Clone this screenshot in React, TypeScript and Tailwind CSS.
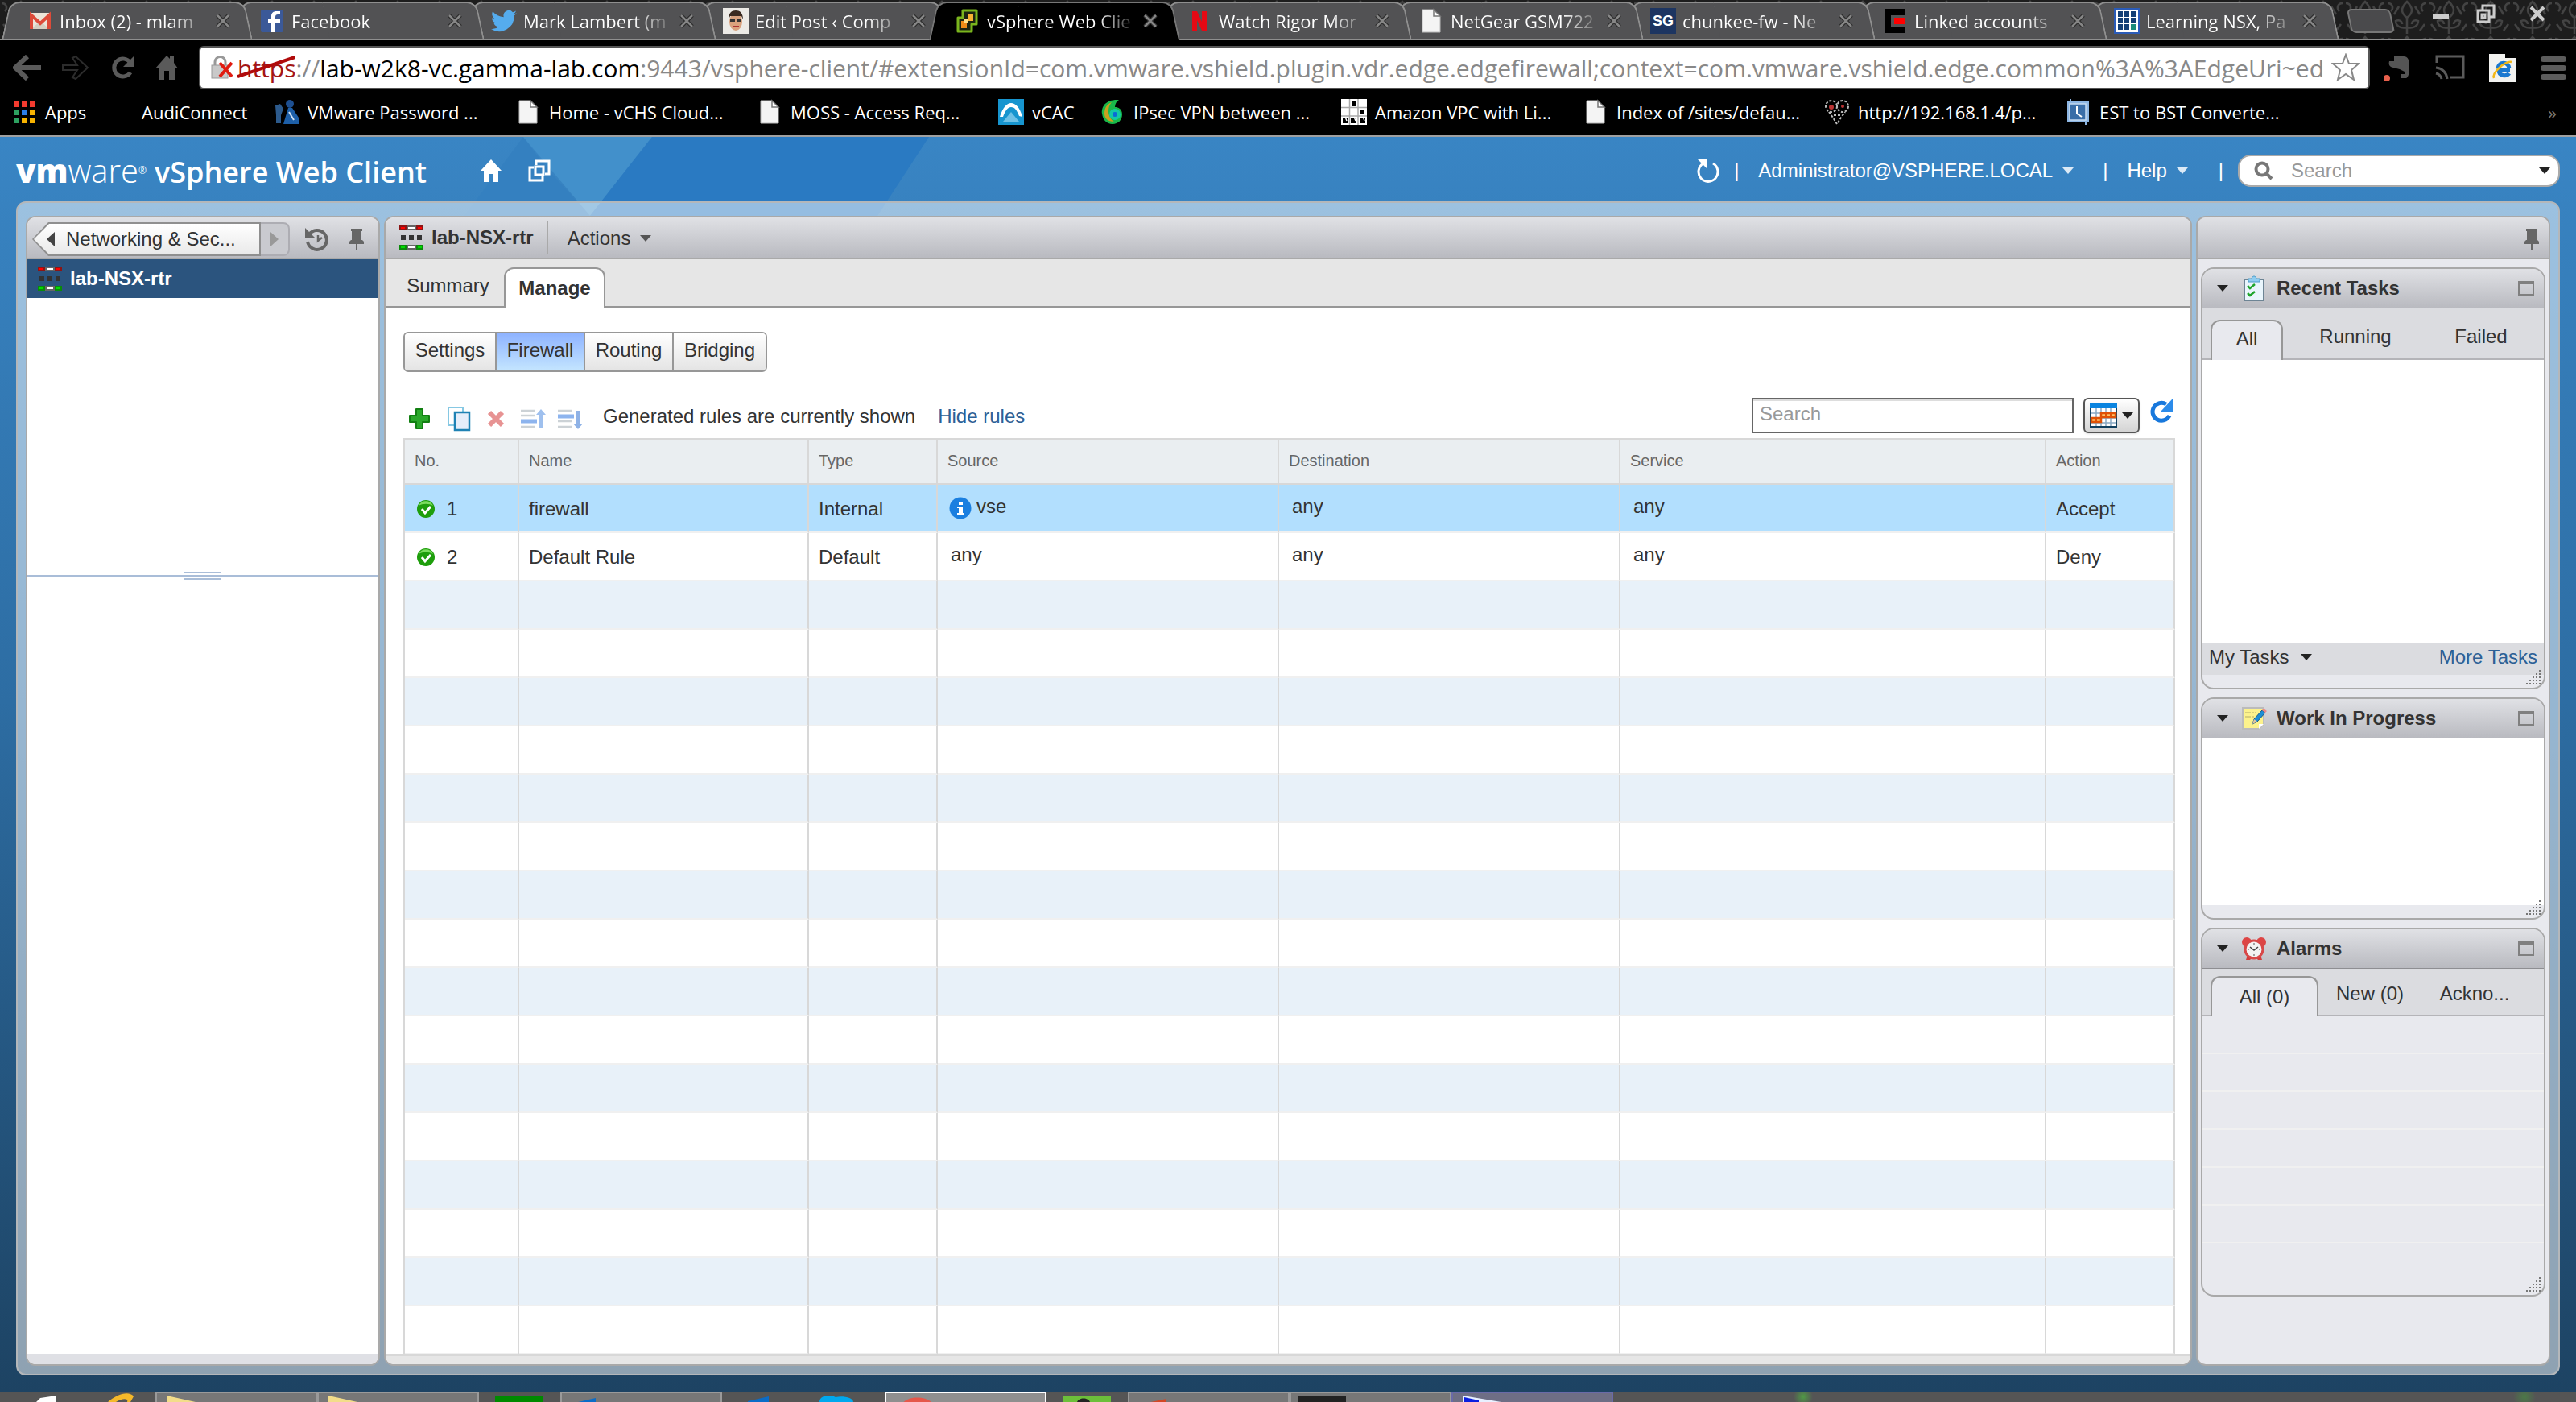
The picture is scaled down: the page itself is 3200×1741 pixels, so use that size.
import React from 'react';

interface BrowserTab {
  title: string;
  icon: React.ReactNode;
  active?: boolean;
}

interface Bookmark {
  label: string;
  icon: React.ReactNode;
  width: string;
}

interface Rule {
  no: number;
  name: string;
  type: string;
  source: string;
  info?: boolean;
  destination: string;
  service: string;
  action: string;
}

/* ---------- ICONS ---------- */

const DocIcon = () => (
  <svg viewBox="0 0 32 32" className="size-8">
    <path d="M5 2h14l8 8v20H5z" fill="#f4f4f4" stroke="#bbb" strokeWidth="1" />
    <path d="M19 2v8h8z" fill="#fff" stroke="#777" strokeWidth="1.5" />
  </svg>
);

const GmailIcon = () => (
  <svg viewBox="0 0 32 32" className="size-8">
    <rect x="3" y="6" width="26" height="20" fill="#ece5d8" />
    <path d="M5 26L16 16l11 10z" fill="#d6cfc0" />
    <path d="M5 26V9l11 10L27 9v17" fill="none" stroke="#dd4b39" strokeWidth="4" />
  </svg>
);

const FacebookIcon = () => (
  <svg viewBox="0 0 32 32" className="size-8">
    <rect x="2" y="2" width="28" height="28" rx="2" fill="#3b5998" />
    <path d="M26 8h-3c-2 0-3 1-3 3v3h6v4h-6v12h-5V18h-4v-4h4v-4c0-4 3-6 6-6h5z" fill="#fff" />
  </svg>
);

const TwitterIcon = () => (
  <svg viewBox="0 0 24 24" className="size-8">
    <path
      fill="#55acee"
      d="M23.9 4.6a10 10 0 0 1-2.8.8 5 5 0 0 0 2.2-2.7c-1 .6-2 1-3.1 1.2a4.9 4.9 0 0 0-8.4 4.5A14 14 0 0 1 1.6 3.2a4.9 4.9 0 0 0 1.5 6.5 5 5 0 0 1-2.2-.6 4.9 4.9 0 0 0 4 4.9 5 5 0 0 1-2.3.1 4.9 4.9 0 0 0 4.6 3.4A10 10 0 0 1 0 19.5a14 14 0 0 0 21.5-12.4 10 10 0 0 0 2.4-2.5z"
    />
  </svg>
);

const FaceIcon = () => (
  <svg viewBox="0 0 32 32" className="size-8">
    <rect width="32" height="32" fill="#eceae6" />
    <ellipse cx="16" cy="17" rx="8" ry="11" fill="#d9a27e" />
    <path d="M7 14c0-8 4-11 9-11s9 3 9 11l-2-4H9z" fill="#3a2a20" />
    <path d="M9 14h6v3H9zM17 14h6v3h-6z" fill="#333" />
    <path d="M12 23h8" stroke="#a33" strokeWidth="2" />
  </svg>
);

const VsphereIcon = () => (
  <svg viewBox="0 0 32 32" className="size-8">
    <path d="M13 3h14v17h-6v9H4V12h6V3z" fill="#1c2412" stroke="#7ab51d" strokeWidth="3" strokeLinejoin="round" />
    <rect x="16" y="7" width="7" height="9" fill="#f9b233" />
    <rect x="8" y="16" width="7" height="9" fill="#ef8a17" />
    <path d="M12 13h5v6h-5z" fill="#ffe08a" />
  </svg>
);

const NetflixIcon = () => (
  <svg viewBox="0 0 32 32" className="size-8">
    <path d="M7 4h6l6 13V4h6v24h-6l-6-13v13H7z" fill="#e50914" />
  </svg>
);

const SgIcon = () => (
  <span className="flex size-8 items-center justify-center bg-[#1d3561] font-['Liberation_Sans'] text-lg font-bold text-white">SG</span>
);

const EIcon = () => (
  <svg viewBox="0 0 32 32" className="size-8">
    <path d="M3 1h26v8H11v14h18v8H3z" fill="#000" />
    <rect x="15" y="12" width="13" height="8" fill="#f00" />
  </svg>
);

const GridIcon = () => (
  <svg viewBox="0 0 32 32" className="size-8">
    <rect x="1" y="1" width="30" height="30" fill="#fff" stroke="#2a5bb8" strokeWidth="2" />
    {[4, 12, 20].map(y => [5, 13, 21].map(x => (
      <rect key={`${x}-${y}`} x={x} y={y} width="6" height="7" fill={x === 21 && y === 20 ? '#1a8c7a' : '#123e75'} />
    )))}
  </svg>
);

const AppsIcon = () => (
  <svg viewBox="0 0 32 32" className="size-8">
    {['#f33b2f', '#f33b2f', '#f33b2f', '#2da160', '#2b7de9', '#f7b200', '#2da160', '#f7b200', '#f7b200'].map((c, i) => (
      <rect key={i} x={3 + (i % 3) * 10} y={3 + Math.floor(i / 3) * 10} width="7" height="7" fill={c} />
    ))}
  </svg>
);

const VmPasswordIcon = () => (
  <svg viewBox="0 0 32 32" className="size-8">
    <circle cx="20" cy="6" r="5" fill="#1d4f91" />
    <path d="M12 31l6-20h5l8 12v8z" fill="#1d5fa8" />
    <path d="M2 8l6-2 4 6-3 8v10H3V20z" fill="#2c5a8c" />
    <path d="M19 16l6 10" stroke="#cfe0f2" strokeWidth="2" />
  </svg>
);

const VcacIcon = () => (
  <svg viewBox="0 0 32 32" className="size-8">
    <rect width="32" height="32" fill="#1795cf" />
    <path d="M2 22C6 10 11 5 16 5s11 5 14 17l-4-1c-3-8-6-11-10-11S9 14 6 22z" fill="#fff" />
    <path d="M6 28l10-12 10 12z" fill="#6fc1e6" />
  </svg>
);

const IpsecIcon = () => (
  <svg viewBox="0 0 32 32" className="size-8">
    <path d="M24 1C8 0 2 9 3 18c1 8 6 13 13 13s12-5 12-12-5-9-9-9c0-4 2-7 5-9z" fill="#19b84a" />
    <path d="M6 18c0-8 4-12 9-14-7 8-4 20 3 24-8 0-12-4-12-10z" fill="#c9a01f" />
    <circle cx="19" cy="19" r="7" fill="#12c9a6" />
    <circle cx="19" cy="19" r="3" fill="#0b6bd6" />
  </svg>
);

const AmazonIcon = () => (
  <svg viewBox="0 0 32 32" className="size-8">
    <rect width="32" height="32" fill="#fff" />
    <path d="M0 10.5h32M0 21h32M10.5 0v32M21 0v32" stroke="#aaa" strokeWidth="1.5" />
    <rect x="13" y="2" width="6" height="7" fill="#000" />
    <rect x="23" y="13" width="6" height="6" fill="#000" />
    <path d="M2 24h7v6H2zM12 24h7v6h-7zM23 24h7v6h-7z" fill="#000" />
    <path d="M5 22l2 5M16 22l2 5M27 22l2 5" stroke="#fff" strokeWidth="1.5" />
  </svg>
);

const BugIcon = () => (
  <svg viewBox="0 0 32 32" className="size-8">
    <g fill="none" stroke="#bbb" strokeWidth="2" strokeDasharray="3 2">
      <circle cx="9" cy="9" r="7" />
      <circle cx="23" cy="9" r="7" />
      <path d="M6 16l5 7 5 8 5-8 5-7M12 20h8" />
    </g>
    <circle cx="9" cy="10" r="3" fill="#b33" />
    <circle cx="23" cy="9" r="2" fill="#b33" />
  </svg>
);

const ClockIcon = () => (
  <svg viewBox="0 0 32 32" className="size-8">
    <path d="M2 3h3V0h2v3h22v26h-2v3h-3v-3H2z" fill="#8db6e3" />
    <rect x="5" y="6" width="20" height="20" fill="#3a6ea8" stroke="#c5daf0" strokeWidth="1.5" />
    <path d="M14 9v9l6 4" fill="none" stroke="#fff" strokeWidth="2" />
  </svg>
);

const RouterIcon = () => (
  <svg viewBox="0 0 30 30" className="size-[30px] shrink-0">
    <rect width="30" height="6" fill="#8c1515" />
    <path d="M2 2h5v2H2zM23 2h5v2h-5z" fill="#f00" />
    <rect x="9" width="12" height="6" fill="#666" />
    <rect x="11" y="2" width="8" height="2" fill="#fff" />
    <path d="M2 12h6v6H2zM12 12h6v6h-6zM22 12h6v6h-6z" fill="#333" />
    <rect y="24" width="30" height="6" fill="#0a8a0a" />
    <path d="M2 26h5v2H2zM23 26h5v2h-5z" fill="#0d0" />
    <rect x="9" y="24" width="12" height="6" fill="#666" />
    <rect x="11" y="26" width="8" height="2" fill="#fff" />
  </svg>
);

const PinIcon = () => (
  <svg viewBox="0 0 18 26" className="h-[26px] w-[18px]">
    <path d="M2 0h14v3h-1v11h1l2 2v3h-8v7H8v-7H0v-3l2-2h1V3H2z" fill="#666" />
  </svg>
);

const HistoryIcon = () => (
  <svg viewBox="0 0 32 32" className="size-8">
    <path d="M6 10a12 12 0 1 1-2 9" fill="none" stroke="#666" strokeWidth="4" />
    <path d="M1 2v12h12z" fill="#666" />
    <path d="M17 11v7l5-4" fill="none" stroke="#666" strokeWidth="2.5" />
  </svg>
);

const Caret = ({ className }: { className: string }) => (
  <svg viewBox="0 0 14 8" className={`h-2 w-3.5 shrink-0 ${className}`}>
    <path d="M0 0h14L7 8z" fill="currentColor" />
  </svg>
);

const CheckIcon = () => (
  <svg viewBox="0 0 24 24" className="size-6 shrink-0">
    <circle cx="12" cy="12" r="11" fill="#1e9e0c" />
    <path d="M3 8a10 10 0 0 1 18 0c-5-3-13-3-18 0z" fill="#7bdc5f" />
    <path d="M7 12l4 5 7-8" fill="none" stroke="#fff" strokeWidth="3" />
  </svg>
);

const InfoIcon = () => (
  <svg viewBox="0 0 28 28" className="size-7 shrink-0">
    <circle cx="14" cy="14" r="13.5" fill="#1a7fe0" />
    <path d="M12 6h5v4h-5zM10 12h7v8h2v2h-9v-2h2v-6h-2z" fill="#fff" />
  </svg>
);

const TasksIcon = () => (
  <svg viewBox="0 0 28 32" className="h-8 w-7">
    <rect x="2" y="5" width="24" height="26" fill="#e9f5fc" stroke="#6d8494" strokeWidth="2" />
    <path d="M7 8V4h4c1-4 5-4 6 0h4v4z" fill="#8fcdf0" stroke="#4a9cc9" strokeWidth="1" />
    <path d="M6 13l3 3 6-5M6 22l3 3 6-5" fill="none" stroke="#1fa52c" strokeWidth="2.5" />
  </svg>
);

const NoteIcon = () => (
  <svg viewBox="0 0 32 28" className="h-7 w-8">
    <path d="M2 1h26v20l-6 6H2z" fill="#fcf28c" stroke="#bbb" strokeWidth="2" />
    <path d="M22 27v-6h6z" fill="#fff" />
    <path d="M5 7h14M5 12h12" stroke="#d8cf7a" strokeWidth="2" strokeDasharray="3 1" />
    <path d="M14 21l2-6L26 4l4 3-10 11z" fill="#1c8ed6" stroke="#125a8a" />
    <path d="M26 4l2-2 4 3-2 2z" fill="#e88" />
    <path d="M14 21l2-6 4 3z" fill="#e7c79c" />
  </svg>
);

const AlarmIcon = () => (
  <svg viewBox="0 0 32 30" className="h-[30px] w-8">
    <circle cx="7" cy="7" r="6" fill="#dd4545" />
    <circle cx="25" cy="7" r="6" fill="#dd4545" />
    <path d="M6 29l2-6h16l2 6h-5l-2-2h-6l-2 2z" fill="#d33c3c" />
    <circle cx="16" cy="16" r="11" fill="#f3f3f3" stroke="#d84848" strokeWidth="3" />
    <path d="M11 13l5 4 5-4" fill="none" stroke="#444" strokeWidth="1.5" />
    <path d="M16 8v2M16 22v2M8 16h2M22 16h2" stroke="#888" strokeWidth="1.5" />
  </svg>
);

const ResizeGrip = () => (
  <svg viewBox="0 0 20 20" className="absolute right-0.5 bottom-0.5 size-5">
    {[0, 1, 2, 3, 4].map(r => [0, 1, 2, 3, 4].filter(c => c + r >= 4).map(c => (
      <rect key={`${r}-${c}`} x={c * 4} y={r * 4} width="2" height="2" fill="#777" />
    )))}
  </svg>
);

/* ---------- DATA ---------- */

const browserTabs: BrowserTab[] = [
  { title: 'Inbox (2) - mlam', icon: <GmailIcon /> },
  { title: 'Facebook', icon: <FacebookIcon /> },
  { title: 'Mark Lambert (m', icon: <TwitterIcon /> },
  { title: 'Edit Post ‹ Comp', icon: <FaceIcon /> },
  { title: 'vSphere Web Clie', icon: <VsphereIcon />, active: true },
  { title: 'Watch Rigor Mor', icon: <NetflixIcon /> },
  { title: 'NetGear GSM722', icon: <DocIcon /> },
  { title: 'chunkee-fw - Ne', icon: <SgIcon /> },
  { title: 'Linked accounts', icon: <EIcon /> },
  { title: 'Learning NSX, Pa', icon: <GridIcon /> },
];

const bookmarks: Bookmark[] = [
  { label: 'Apps', icon: <AppsIcon />, width: 'w-[120px]' },
  { label: 'AudiConnect', icon: null, width: 'w-[206px]' },
  { label: 'VMware Password ...', icon: <VmPasswordIcon />, width: 'w-[300px]' },
  { label: 'Home - vCHS Cloud...', icon: <DocIcon />, width: 'w-[300px]' },
  { label: 'MOSS - Access Req...', icon: <DocIcon />, width: 'w-[300px]' },
  { label: 'vCAC', icon: <VcacIcon />, width: 'w-[126px]' },
  { label: 'IPsec VPN between ...', icon: <IpsecIcon />, width: 'w-[300px]' },
  { label: 'Amazon VPC with Li...', icon: <AmazonIcon />, width: 'w-[300px]' },
  { label: 'Index of /sites/defau...', icon: <DocIcon />, width: 'w-[300px]' },
  { label: 'http://192.168.1.4/p...', icon: <BugIcon />, width: 'w-[300px]' },
  { label: 'EST to BST Converte...', icon: <ClockIcon />, width: 'w-[300px]' },
];

const rules: Rule[] = [
  { no: 1, name: 'firewall', type: 'Internal', source: 'vse', info: true, destination: 'any', service: 'any', action: 'Accept' },
  { no: 2, name: 'Default Rule', type: 'Default', source: 'any', destination: 'any', service: 'any', action: 'Deny' },
];

const EMPTY_ROWS = 16;

/* ---------- BROWSER ---------- */

const TabStrip = () => (
  <div className="relative flex h-[50px] overflow-hidden bg-[#1d1d1d] pl-2.5">
    <svg className="absolute inset-0 size-full">
      <defs>
        <pattern id="damask" width="52" height="44" patternUnits="userSpaceOnUse">
          <g fill="none" stroke="#434343" strokeWidth="2.5">
            <path d="M26 2c-8 8-8 14 0 20 8-6 8-12 0-20zM26 22v20M26 34c-8 2-14-2-14-8 4-2 8 0 8 4M26 34c8 2 14-2 14-8-4-2-8 0-8 4" />
            <path d="M2 4c6 0 8 6 4 10M50 4c-6 0-8 6-4 10M4 30l6 8M48 30l-6 8M16 8l-6 10M36 8l6 10" />
          </g>
        </pattern>
      </defs>
      <rect width="100%" height="100%" fill="url(#damask)" />
    </svg>
    <div className="absolute inset-x-0 bottom-0 h-0.5 bg-[#8f8f8f]" />
    {browserTabs.map((tab, i) => {
      const skin = tab.active ? 'bg-black border-[#777]' : 'bg-[#525254] border-[#8f8f8f]';
      return (
        <div key={tab.title} className="relative w-72" style={{ zIndex: tab.active ? 30 : 20 - i }}>
          <span className={`absolute top-0.5 bottom-0 -left-2 w-1/2 origin-bottom-left -skew-x-12 rounded-tl-xl border-t-2 border-l-2 ${skin}`} />
          <span className={`absolute top-0.5 -right-4 bottom-0 w-2/3 origin-bottom-right skew-x-12 rounded-tr-xl border-t-2 border-r-2 ${skin}`} />
          {!tab.active && <span className="absolute -right-4 bottom-0 -left-2 h-0.5 bg-[#8f8f8f]" />}
          <div className="relative flex h-full items-center pt-0.5 pl-6">
            {tab.icon}
            <span
              className={`ml-2 w-[184px] bg-clip-text text-[22px] whitespace-nowrap text-transparent ${
                tab.active ? 'bg-linear-to-r from-white from-75% to-[#222]' : 'bg-linear-to-r from-white from-75% to-[#666]'
              }`}
            >
              {tab.title}
            </span>
            <button aria-label={`Close ${tab.title}`} className="ml-2.5">
              <svg viewBox="0 0 18 18" className="size-[18px]">
                <path d="M2 2l14 14M16 2L2 16" stroke="#2c2c2c" strokeWidth="5" />
                <path d="M2 2l14 14M16 2L2 16" stroke="#868686" strokeWidth="2.5" />
              </svg>
            </button>
          </div>
        </div>
      );
    })}
    <button aria-label="New tab" className="relative mt-[11px] ml-7 h-[30px] w-[54px] skew-x-12 rounded-md border-2 border-[#777] bg-[#4a4a4c]" />
    <div className="relative mr-8 ml-auto flex items-center gap-7 pb-4 text-[#ccc]">
      <button aria-label="Minimize" className="flex w-8 justify-center pt-2"><span className="h-1.5 w-5 bg-[#ccc]" /></button>
      <button aria-label="Restore" className="w-8">
        <svg viewBox="0 0 24 24" className="size-6" fill="none" stroke="currentColor" strokeWidth="3">
          <path d="M8 7V2h14v14h-5M2 8h14v14H2zM7 13h4v4H7z" />
        </svg>
      </button>
      <button aria-label="Close" className="flex w-8 justify-center">
        <svg viewBox="0 0 20 20" className="size-5"><path d="M2 2l16 16M18 2L2 18" stroke="currentColor" strokeWidth="4" /></svg>
      </button>
    </div>
  </div>
);

const AddressBar = () => (
  <div className="flex h-16 items-center bg-black pt-1 pr-3 pl-4">
    <div className="flex w-[231px] items-center gap-6 text-[#5a5a5a]">
      <button aria-label="Back">
        <svg viewBox="0 0 36 32" className="h-8 w-9"><path d="M18 2L3 16l15 14M5 16h30" fill="none" stroke="currentColor" strokeWidth="6" /></svg>
      </button>
      <button aria-label="Forward">
        <svg viewBox="0 0 36 32" className="h-8 w-9"><path d="M2 13h18L14 4l4-2 15 14-15 14-4-2 6-9H2z" fill="none" stroke="#2c2c2c" strokeWidth="2" /></svg>
      </button>
      <button aria-label="Reload">
        <svg viewBox="0 0 32 32" className="size-8"><path d="M26 22a11 11 0 1 1 0-12" fill="none" stroke="currentColor" strokeWidth="5" /><path d="M30 2v13H17z" fill="currentColor" /></svg>
      </button>
      <button aria-label="Home">
        <svg viewBox="0 0 30 32" className="h-8 w-[30px]"><path d="M15 1l4 4V2h5v8l5 7h-4v14h-7V20h-6v11H5V17H1z" fill="currentColor" /></svg>
      </button>
    </div>
    <div className="flex h-[54px] min-w-0 flex-1 items-center rounded-md border-2 border-[#555] bg-white pr-1.5 pl-3 text-[30px]">
      <svg viewBox="0 0 30 32" className="h-8 w-[30px] shrink-0">
        <path d="M6 14V9a6 6 0 0 1 13 0v5" fill="none" stroke="#999" strokeWidth="3" />
        <rect x="2" y="13" width="20" height="16" fill="#c9c9c9" stroke="#999" />
        <path d="M12 10l15 17M27 10L12 27" stroke="#e01b10" strokeWidth="4" />
      </svg>
      <span className="relative ml-1 text-[#a31515]">
        https
        <svg viewBox="0 0 70 30" className="absolute top-1.5 left-0 h-[30px] w-full" preserveAspectRatio="none">
          <path d="M0 27L69 3" stroke="#b00b0b" strokeWidth="4" />
        </svg>
      </span>
      <span className="text-[#888]">://</span>
      <span className="text-black">lab-w2k8-vc.gamma-lab.com</span>
      <input
        aria-label="Address"
        className="min-w-0 flex-1 bg-transparent text-[#888] outline-none"
        defaultValue=":9443/vsphere-client/#extensionId=com.vmware.vshield.plugin.vdr.edge.edgefirewall;context=com.vmware.vshield.edge.common%3A%3AEdgeUri~ed"
      />
      <button aria-label="Bookmark this page" className="mr-1">
        <svg viewBox="0 0 36 36" className="size-9">
          <path d="M18 2l4 11h12l-9 8 3 12-10-7-10 7 3-12-9-8h12z" fill="#fff" stroke="#888" strokeWidth="2" />
        </svg>
      </button>
    </div>
    <div className="ml-4 flex items-center gap-7">
      <button aria-label="Clipper">
        <svg viewBox="0 0 36 36" className="size-9">
          <path d="M14 4h12c5 0 7 4 7 12s-1 14-4 15h-6v-5h4v-3l-6-3-8-2c-5-1-6-4-5-8h6z" fill="#555" />
          <circle cx="5" cy="31" r="4" fill="#e8604c" />
        </svg>
      </button>
      <button aria-label="Cast">
        <svg viewBox="0 0 38 32" className="h-8 w-[38px]" fill="none" stroke="#5a5a5a" strokeWidth="3">
          <path d="M3 10V2h33v26H20M2 16c8 1 13 6 14 14M2 23c4 1 6 3 7 7" />
        </svg>
      </button>
      <button aria-label="IE Tab">
        <svg viewBox="0 0 38 38" className="size-[38px]">
          <path d="M2 2h20v5h14v30H2z" fill="#f2f2f0" />
          <path d="M28 22H14c0 8 10 8 13 4M13 20c1-9 13-9 14 0" fill="none" stroke="#1b78d0" strokeWidth="5" />
          <path d="M8 32c-3-6 14-22 22-20" fill="none" stroke="#f2b81a" strokeWidth="2.5" />
        </svg>
      </button>
      <button aria-label="Menu" className="flex flex-col gap-1">
        <span className="h-[7px] w-8 rounded-sm bg-[#5c5c5c]" />
        <span className="h-[7px] w-8 rounded-sm bg-[#5c5c5c]" />
        <span className="h-[7px] w-8 rounded-sm bg-[#5c5c5c]" />
      </button>
    </div>
  </div>
);

const BookmarkBar = () => (
  <nav className="flex h-14 items-center border-b-2 border-[#a0a0a0] bg-black pr-6 pb-1 pl-3.5 text-[22px] text-white">
    {bookmarks.map(b => (
      <a key={b.label} href="#" className={`flex items-center gap-2.5 whitespace-nowrap ${b.width}`}>
        <span className="size-8 shrink-0">{b.icon}</span>
        {b.label}
      </a>
    ))}
    <button aria-label="More bookmarks" className="ml-auto text-[#777]">»</button>
  </nav>
);

/* ---------- VSPHERE ---------- */

const AppHeader = () => (
  <header className="flex h-20 items-center pt-1 pr-5 pl-5 text-2xl text-white">
    <div className="flex items-baseline font-['Open_Sans']">
      <span className="text-[40px] font-extrabold">vm</span>
      <span className="text-[40px] font-light">ware</span>
      <span className="self-center text-xs">®</span>
      <span className="ml-2.5 text-[36px] font-semibold">vSphere Web Client</span>
    </div>
    <button aria-label="Home" className="ml-[66px]">
      <svg viewBox="0 0 28 28" className="size-7"><path d="M14 0l13 14h-4v14h-6V18h-6v10H5V14H1z" fill="#fff" /></svg>
    </button>
    <button aria-label="New window" className="ml-8">
      <svg viewBox="0 0 28 28" className="size-7" fill="none" stroke="#fff" strokeWidth="3">
        <path d="M10 7V2h16v16h-5M7 10H2v16h16v-5M9 9h10v10H9z" />
      </svg>
    </button>
    <button aria-label="Refresh" className="ml-auto">
      <svg viewBox="0 0 28 30" className="h-[30px] w-7">
        <path d="M20 6a12 12 0 1 1-12 0" fill="none" stroke="#fff" strokeWidth="3" />
        <path d="M1 1h11v11z" fill="#fff" />
      </svg>
    </button>
    <span className="ml-[18px]">|</span>
    <button className="ml-6 flex items-center gap-3">Administrator@VSPHERE.LOCAL <Caret className="text-[#dceaf6]" /></button>
    <span className="ml-9">|</span>
    <button className="ml-6 flex items-center gap-3">Help <Caret className="text-[#dceaf6]" /></button>
    <span className="ml-[38px]">|</span>
    <div className="ml-[18px] flex h-10 w-[400px] items-center rounded-2xl border-2 border-[#aaa] bg-white pr-2.5 pl-[18px]">
      <svg viewBox="0 0 24 24" className="size-6 shrink-0">
        <circle cx="10" cy="10" r="7.5" fill="none" stroke="#777" strokeWidth="4" />
        <path d="M15 15l7 7" stroke="#777" strokeWidth="4" />
      </svg>
      <input aria-label="Search inventory" placeholder="Search" className="ml-[22px] min-w-0 flex-1 text-2xl outline-none placeholder:text-[#999]" />
      <Caret className="text-[#222]" />
    </div>
  </header>
);

const Navigator = () => (
  <aside className="flex w-[440px] shrink-0 flex-col overflow-hidden rounded-xl border-2 border-[#a9a9a9] bg-white">
    <div className="flex h-[52px] shrink-0 items-center border-b-2 border-[#a9a9a9] bg-linear-to-b from-[#e0e1e5] to-[#b9bac0] pt-1 pl-1.5">
      <button className="h-[42px] w-[284px] bg-[#8f8f8f] p-0.5 [clip-path:polygon(20px_0,100%_0,100%_100%,20px_100%,0_50%)]">
        <span className="flex h-full items-center bg-linear-to-b from-white to-[#e9e9e9] pl-4 [clip-path:polygon(19px_0,100%_0,100%_100%,19px_100%,0_50%)]">
          <svg viewBox="0 0 10 18" className="h-[18px] w-2.5"><path d="M10 0v18L0 9z" fill="#444" /></svg>
          <span className="ml-3.5">Networking &amp; Sec...</span>
        </span>
      </button>
      <button aria-label="Forward" className="flex h-[42px] w-9 items-center justify-center rounded-r-lg border-2 border-l-0 border-[#adadb3] bg-[#c9cacf]">
        <svg viewBox="0 0 10 18" className="h-[18px] w-2.5"><path d="M0 0v18l10-9z" fill="#999" /></svg>
      </button>
      <button aria-label="History" className="ml-[18px]"><HistoryIcon /></button>
      <button aria-label="Pin" className="ml-6"><PinIcon /></button>
    </div>
    <a href="#" className="flex h-12 shrink-0 items-center gap-2.5 bg-[#2b547e] pl-[13px] font-bold text-white">
      <RouterIcon /> lab-NSX-rtr
    </a>
    <div className="h-[340px]" />
    <div className="flex h-2.5 flex-col items-center justify-between bg-linear-to-b from-transparent from-40% via-[#a9bdd8] via-40% to-transparent to-60%">
      <span className="h-0.5 w-[46px] bg-[#a9bdd8]" />
      <span className="h-0.5 w-full bg-[#a9bdd8]" />
      <span className="h-0.5 w-[46px] bg-[#a9bdd8]" />
    </div>
    <div className="flex-1" />
    <div className="h-3 bg-[#dfe0e5]" />
  </aside>
);

const RulesToolbar = () => (
  <div className="mt-8 flex h-11 items-center">
    <div className="flex items-center pt-2 pl-1.5">
      <button aria-label="Add rule">
        <svg viewBox="0 0 28 28" className="size-7"><path d="M10 2h8v8h8v8h-8v8h-8v-8H2v-8h8z" fill="#2aa82a" stroke="#128012" strokeWidth="2" strokeLinejoin="round" /></svg>
      </button>
      <button aria-label="Copy rule" className="ml-5">
        <svg viewBox="0 0 30 32" className="h-8 w-[30px]">
          <path d="M2 2h18v22H2z" fill="#fff" stroke="#86c8e3" strokeWidth="2" />
          <path d="M10 8h18v22H10z" fill="#e6eefa" stroke="#1f82b4" strokeWidth="2.5" />
        </svg>
      </button>
      <button aria-label="Delete rule" className="ml-5">
        <svg viewBox="0 0 22 22" className="size-[22px]"><path d="M3 3l16 16M19 3L3 19" stroke="#e79393" strokeWidth="6" /></svg>
      </button>
      <button aria-label="Move up" className="ml-5">
        <svg viewBox="0 0 32 26" className="h-[26px] w-8">
          <path d="M0 3h18M0 9h18M0 23h18" stroke="#ccd2d6" strokeWidth="2.5" />
          <path d="M0 16h20" stroke="#8db4ee" strokeWidth="5" />
          <path d="M25 1l6 7h-4v16h-4V8h-4z" fill="#9fc0ee" />
        </svg>
      </button>
      <button aria-label="Move down" className="ml-3.5">
        <svg viewBox="0 0 32 26" className="h-[26px] w-8">
          <path d="M0 3h18M0 16h18M0 23h18" stroke="#ccd2d6" strokeWidth="2.5" />
          <path d="M0 10h20" stroke="#8db4ee" strokeWidth="5" />
          <path d="M25 26l6-7h-4V3h-4v16h-4z" fill="#8fb2e6" />
        </svg>
      </button>
    </div>
    <span className="ml-6 pt-0.5">Generated rules are currently shown</span>
    <a href="#" className="ml-7 pt-0.5 text-[#2c6096]">Hide rules</a>
    <input aria-label="Search rules" placeholder="Search" className="ml-auto h-11 w-[400px] border-2 border-[#666] px-2 pb-1 shadow-[inset_0_2px_0_#ddd] outline-none placeholder:text-[#999]" />
    <button aria-label="Columns" className="ml-3 flex h-11 w-[70px] items-center justify-center gap-1.5 rounded-md border-2 border-[#555] bg-linear-to-b from-white to-[#d4d4d4] shadow-sm">
      <svg viewBox="0 0 34 30" className="h-[30px] w-[34px]">
        <rect x="1" y="1" width="32" height="28" fill="#fff" stroke="#12405f" strokeWidth="2" />
        <rect width="34" height="6" fill="#0a84e0" />
        <path d="M8 6v22M14 6v22M20 6v22M26 6v22M2 12h30M2 18h30M2 24h30" stroke="#8aa9c4" strokeWidth="1.5" />
        <path d="M14 12h18v5H14zM2 18h12v5H2z" fill="#ffc266" stroke="#e05206" strokeWidth="2.5" />
        <path d="M20 12v5M26 12v5M8 18v5" stroke="#e05206" strokeWidth="2" />
      </svg>
      <Caret className="text-[#222]" />
    </button>
    <button aria-label="Refresh rules" className="mr-0.5 ml-3 pb-3">
      <svg viewBox="0 0 30 32" className="h-8 w-[30px]">
        <path d="M25 22a11 11 0 1 1-4-14" fill="none" stroke="#1878dc" strokeWidth="5" />
        <path d="M29 1v16H14z" fill="#2b8bea" />
      </svg>
    </button>
  </div>
);

const RulesTable = () => (
  <table className="mt-1.5 w-full table-fixed border-separate border-spacing-0 border-t-2 border-l-2 border-[#d8d8d8] text-left">
    <colgroup>
      <col className="w-[142px]" />
      <col className="w-[360px]" />
      <col className="w-[160px]" />
      <col className="w-[424px]" />
      <col className="w-[424px]" />
      <col />
      <col className="w-[160px]" />
    </colgroup>
    <thead>
      <tr className="h-14 bg-[#eaeef1] text-xl text-[#666]">
        {['No.', 'Name', 'Type', 'Source', 'Destination', 'Service', 'Action'].map(h => (
          <th key={h} className="border-r-2 border-b-2 border-[#d8d8d8] pb-0.5 pl-3 font-normal">{h}</th>
        ))}
      </tr>
    </thead>
    <tbody className="[&_td]:border-r-2 [&_td]:border-b-2 [&_td]:border-r-[#d8d8d8] [&_td]:border-b-[#f0f0f0]">
      {rules.map(rule => (
        <tr key={rule.no} className={`h-[60px] ${rule.no === 1 ? 'bg-[#b2dffe]' : 'bg-white'}`}>
          <td className="pt-0.5 pl-3.5"><span className="flex items-center gap-3.5"><CheckIcon />{rule.no}</span></td>
          <td className="pt-0.5 pl-3">{rule.name}</td>
          <td className="pt-0.5 pl-3">{rule.type}</td>
          <td className={rule.info ? 'pl-3.5' : 'pb-1 pl-4'}>
            {rule.info ? <span className="flex gap-1.5"><InfoIcon /><span className="-mt-1">{rule.source}</span></span> : rule.source}
          </td>
          <td className="pb-1 pl-4">{rule.destination}</td>
          <td className="pb-1 pl-4">{rule.service}</td>
          <td className="pt-0.5 pl-3">{rule.action}</td>
        </tr>
      ))}
      {Array.from({ length: EMPTY_ROWS }, (_, r) => (
        <tr key={r} className="h-[60px] odd:bg-[#e8f1f9] even:bg-white">
          {Array.from({ length: 7 }, (_, c) => <td key={c} />)}
        </tr>
      ))}
    </tbody>
  </table>
);

const MainPanel = () => (
  <main className="flex min-w-0 flex-1 flex-col overflow-hidden rounded-xl border-2 border-[#a9a9a9] bg-white">
    <div className="flex h-[52px] items-center border-b-2 border-[#a9a9a9] bg-linear-to-b from-[#e0e1e5] to-[#b9bac0] pl-[17px]">
      <RouterIcon />
      <h1 className="ml-2.5 font-bold">lab-NSX-rtr</h1>
      <span className="ml-4 h-[42px] w-0.5 bg-[#a9a9a9]" />
      <button className="ml-6 flex items-center gap-3 pt-0.5">Actions <Caret className="text-[#555]" /></button>
    </div>
    <div className="flex h-[60px] items-end bg-[#e6e6e6]">
      <button className="h-full w-[147px] border-b-2 border-[#979797] pt-2 pl-2">Summary</button>
      <button className="h-[50px] w-[126px] rounded-t-xl border-2 border-b-0 border-[#979797] bg-white font-bold">Manage</button>
      <span className="h-full flex-1 border-b-2 border-[#979797]" />
    </div>
    <div className="pt-[30px] pr-[19px] pl-[22px]">
      <div className="inline-flex h-[50px] divide-x-2 divide-[#979797] overflow-hidden rounded-md border-2 border-[#979797] align-top [&>button]:pb-1">
        <button className="w-[114px] bg-linear-to-b from-white to-[#e4e4e4]">Settings</button>
        <button className="w-[110px] bg-linear-to-b from-[#8fb3ff] to-[#c4e5ff]">Firewall</button>
        <button className="w-[110px] bg-linear-to-b from-white to-[#e4e4e4]">Routing</button>
        <button className="w-[114px] bg-linear-to-b from-white to-[#e4e4e4]">Bridging</button>
      </div>
      <RulesToolbar />
      <RulesTable />
    </div>
    <div className="h-3 border-t-2 border-[#d8d8d8] bg-[#e6e6e6]" />
  </main>
);

interface PortletProps {
  title: string;
  icon: React.ReactNode;
  children: React.ReactNode;
}

const Portlet: React.FC<PortletProps> = ({ title, icon, children }) => (
  <section className="relative overflow-hidden rounded-2xl border-2 border-[#a9a9a9] bg-[#e8e9ee]">
    <div className="flex h-[49px] items-center border-b border-[#8e8e92] bg-linear-to-b from-[#e0e1e5] to-[#b9bac0] pr-3 pl-[18px]">
      <Caret className="text-[#222]" />
      <span className="mr-3 ml-4 flex w-8 justify-center">{icon}</span>
      <h2 className="font-bold">{title}</h2>
      <button aria-label={`Maximize ${title}`} className="ml-auto h-[18px] w-5 border-2 border-t-4 border-[#808080]" />
    </div>
    {children}
    <ResizeGrip />
  </section>
);

const Sidebar = () => (
  <aside className="flex w-[440px] shrink-0 flex-col overflow-hidden rounded-xl border-2 border-[#a9a9a9] bg-[#e8e9ee]">
    <div className="flex h-[52px] shrink-0 items-center justify-end border-b-2 border-[#a9a9a9] bg-linear-to-b from-[#e0e1e5] to-[#b9bac0] pt-1 pr-3">
      <button aria-label="Pin"><PinIcon /></button>
    </div>
    <div className="flex flex-col gap-2.5 px-1 pt-2.5">
      <Portlet title="Recent Tasks" icon={<TasksIcon />}>
        <div className="flex h-16 items-end bg-[#dbdce0]">
          <span className="h-full w-2.5 border-b-2 border-[#b4b4b8]" />
          <button className="h-[50px] w-[90px] rounded-t-xl border-2 border-b-0 border-[#979797] bg-[#e8e9ee] pb-1">All</button>
          <button className="h-full flex-1 border-b-2 border-[#b4b4b8] pt-2 pl-1">Running</button>
          <button className="h-full w-[148px] border-b-2 border-[#b4b4b8] pt-2 pr-2">Failed</button>
        </div>
        <div className="h-[351px] bg-white" />
        <div className="flex h-10 justify-between bg-[#dbdce0] px-2">
          <button className="flex h-9 items-center gap-3.5">My Tasks <Caret className="text-[#222]" /></button>
          <a href="#" className="flex h-9 items-center text-[#2c6096]">More Tasks</a>
        </div>
        <div className="h-4" />
      </Portlet>
      <Portlet title="Work In Progress" icon={<NoteIcon />}>
        <div className="h-[207px] bg-white" />
        <div className="h-4" />
      </Portlet>
      <Portlet title="Alarms" icon={<AlarmIcon />}>
        <div className="flex h-[59px] items-end bg-[#dbdce0]">
          <span className="h-full w-2.5 border-b-2 border-[#b4b4b8]" />
          <button className="h-[50px] w-[134px] rounded-t-xl border-2 border-b-0 border-[#979797] bg-[#e8e9ee]">All (0)</button>
          <button className="h-full w-[128px] border-b-2 border-[#b4b4b8] pt-1">New (0)</button>
          <button className="h-full flex-1 border-b-2 border-[#b4b4b8] pt-1 pr-5">Ackno...</button>
        </div>
        {Array.from({ length: 6 }, (_, i) => <div key={i} className="h-[47px] border-b-2 border-[#f0f0f0]" />)}
        <div className="h-16" />
      </Portlet>
    </div>
  </aside>
);

/* ---------- TASKBAR ---------- */

const OPEN = 'w-[201px] border-2 border-b-0 border-[#9a9a9a] bg-[#777] pl-3';
const PINNED = 'w-[101px] pl-5';

const taskbarItems = [
  { name: 'Start', box: 'w-[92px] pl-10', art: <path d="M5 13L10 8l20-3v8z" fill="#fff" /> },
  { name: 'Internet Explorer', box: 'w-[101px] pl-10', art: <path d="M2 13C12 4 28-2 34 6l-4 7h-4c2-6-8-4-14 0z" fill="#f5b92a" /> },
  { name: 'Explorer', box: OPEN, art: <path d="M0 3l36 8v2H0z" fill="#f3dd8a" /> },
  { name: 'Documents', box: OPEN, art: <path d="M0 3l36 8v2H0z" fill="#f3dd8a" /> },
  { name: 'Excel', box: PINNED, art: <path d="M0 5h60v8H0z" fill="#008a00" /> },
  { name: 'Outlook', box: OPEN, art: <path d="M4 12L30 6v7H4z" fill="#0a6cc8" /> },
  { name: 'Word', box: 'w-[101px] pl-7', art: <path d="M4 12L30 6v7H4z" fill="#0a6cc8" /> },
  { name: 'Skype', box: PINNED, art: <path d="M0 13c0-8 12-10 20-6 10-2 22 1 22 6z" fill="#00a8ee" /> },
  { name: 'Chrome', box: 'w-[201px] border-2 border-b-0 border-white bg-[#8f8f8f] pl-5', art: <path d="M0 13C6 3 30 3 38 13z" fill="#e5574a" /> },
  { name: 'Evernote', box: PINNED, art: <><path d="M0 5h60v8H0z" fill="#6cbf3a" /><path d="M18 13c2-6 14-6 16 0z" fill="#222" /></> },
  { name: 'PowerPoint', box: OPEN, art: <path d="M10 12l24-5v6H10z" fill="#d24726" /> },
  { name: 'Terminal', box: 'w-[201px] border-2 border-b-0 border-[#9a9a9a] bg-[#777] pl-2', art: <path d="M0 3h60v10H0z" fill="#222" /> },
  { name: 'Remote Desktop', box: 'w-[201px] border-2 border-b-0 border-[#6a6aa8] bg-[#6e6e85] pl-3', art: <><path d="M0 3l48 8v2H0z" fill="#e8f0ff" /><path d="M2 5l18 4v4H2z" fill="#0a1ee0" /></> },
];

const Taskbar = () => (
  <footer className="flex h-[13px] overflow-hidden bg-[#555] bg-[radial-gradient(circle_at_70%_50%,#4f9a45_0,transparent_12px),radial-gradient(circle_at_8%_50%,#4c7048_0,transparent_30px),radial-gradient(circle_at_98%_50%,#4c7a48_0,transparent_14px)]">
    {taskbarItems.map(item => (
      <button key={item.name} aria-label={item.name} className={item.box}>
        <svg viewBox="0 0 60 13" className="h-[13px] w-[60px]">{item.art}</svg>
      </button>
    ))}
  </footer>
);

const App: React.FC = () => {
  return (
    <div className="flex min-h-screen flex-col font-['Open_Sans',sans-serif]">
      <TabStrip />
      <AddressBar />
      <BookmarkBar />
      <div className="relative flex-1 bg-linear-to-b from-[#3985c4] via-[#2d6da3] via-45% to-[#1d4363] font-['Liberation_Sans',Arial,sans-serif] text-2xl text-[#333]">
        {/* faceted backdrop behind the header */}
        <svg viewBox="0 0 1300 110" className="absolute top-0 left-0 h-[110px] w-[1300px]">
          <path d="M650 0L577 98h156L680 40z" fill="#3480c0" />
          <path d="M650 0h160l-77 98z" fill="#4290cb" />
          <path d="M810 0h344l-64 98H733z" fill="#2a7ac2" />
        </svg>
        <div className="relative">
          <AppHeader />
          <div className="mx-5 mb-5 flex gap-[5px] rounded-xl border-2 border-[#b4b7ba] bg-white/50 px-2.5 pt-4 pb-2.5">
            <Navigator />
            <MainPanel />
            <Sidebar />
          </div>
        </div>
      </div>
      <Taskbar />
    </div>
  );
};

export default App;
